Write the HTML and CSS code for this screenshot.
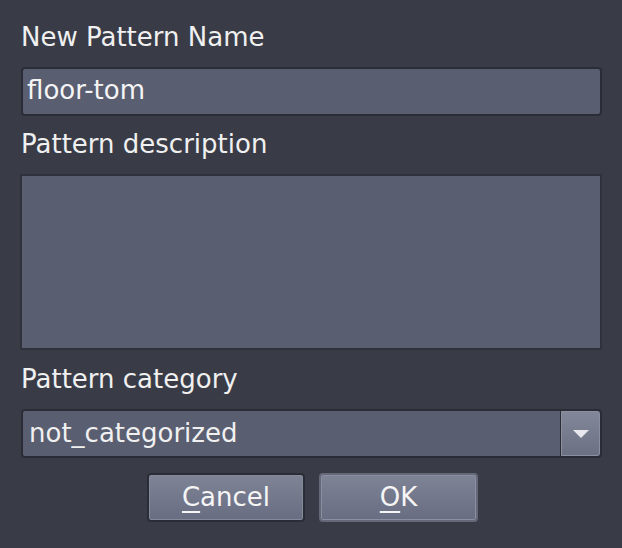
FILE: index.html
```html
<!DOCTYPE html>
<html>
<head>
<meta charset="utf-8">
<link rel="stylesheet" href="styles.css">
</head>
<body>
<div class="dialog">
  <div class="label first">New Pattern Name</div>
  <div class="entry">floor-tom</div>
  <div class="label">Pattern description</div>
  <div class="textarea"></div>
  <div class="label">Pattern category</div>
  <div class="combo">
    <div class="combo-text">not_categorized</div>
    <div class="combo-btn"><span class="arrow"></span></div>
  </div>
  <div class="buttons">
    <div class="btn cancel"><span class="u">C</span>ancel</div>
    <div class="btn ok"><span class="u">O</span>K</div>
  </div>
</div>
</body>
</html>
```
FILE: styles.css
```css
html, body {
  margin: 0;
  padding: 0;
  background: #393c47;
  width: 622px;
  height: 548px;
  overflow: hidden;
}
.dialog {
  display: flex;
  flex-direction: column;
  padding: 0 20px 0 21px;
  font-family: "DejaVu Sans", sans-serif;
  font-size: 26px;
  color: #f0f0f0;
}
.label {
  height: 30px;
  line-height: 30px;
  margin-top: 13px;
  margin-bottom: 15px;
  white-space: nowrap;
}
.label.first {
  margin-top: 22px;
}
.entry {
  box-sizing: border-box;
  height: 49px;
  background: #5a5e71;
  border: 2px solid #2b2d36;
  border-radius: 4px;
  padding: 0 4px;
  line-height: 43px;
  color: #f5f5f5;
}
.textarea {
  box-sizing: border-box;
  height: 176px;
  margin-left: -1px;
  margin-bottom: -1px;
  background: #5a5e71;
  border: 2px solid #2f313b;
}
.textarea + .label {
  margin-top: 15px;
}
.combo {
  display: flex;
  box-sizing: border-box;
  height: 49px;
  border: 2px solid #2b2d36;
  border-radius: 4px;
  background: #5a5e71;
  overflow: hidden;
}
.combo-text {
  flex: 1;
  padding-left: 6px;
  line-height: 44px;
  border-right: 1px solid #2b2d36;
}
.combo-btn {
  box-sizing: border-box;
  width: 39px;
  background: linear-gradient(#83879a, #6c7083);
  border: 1px solid #8b8fa0;
  border-radius: 0 3px 3px 0;
  display: flex;
  align-items: center;
  justify-content: center;
}
.arrow {
  width: 0;
  height: 0;
  margin-left: 1px;
  border-left: 8px solid transparent;
  border-right: 8px solid transparent;
  border-top: 8px solid #e8e8ee;
}
.buttons {
  display: flex;
  gap: 14px;
  margin-top: 15px;
  margin-left: -21px;
  padding-left: 147px;
}
.btn {
  box-sizing: border-box;
  width: 158px;
  height: 49px;
  border-radius: 4px;
  text-align: center;
  line-height: 44px;
  background: linear-gradient(#7f8396, #696d81);
  color: #f5f5f5;
}
.btn.cancel {
  border: 2px solid #2b2d36;
  box-shadow: inset 0 0 0 1px #858a9b;
}
.btn.ok {
  width: 159px;
  border: 2px solid #646879;
  box-shadow: inset 0 0 0 1px #8a8ea0;
}
.u {
  text-decoration: underline;
  text-decoration-thickness: 2px;
  text-underline-offset: 5px;
}
```
